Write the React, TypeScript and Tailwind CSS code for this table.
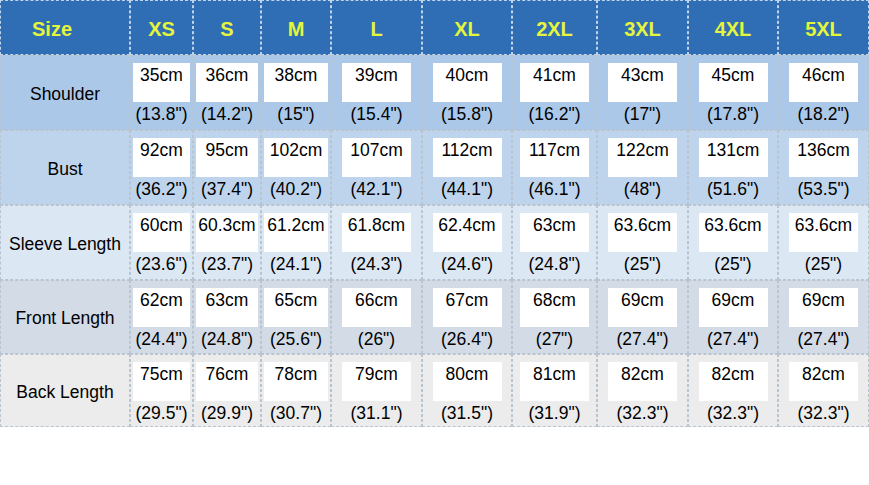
import React from 'react';

const SIZES = ['XS', 'S', 'M', 'L', 'XL', '2XL', '3XL', '4XL', '5XL'];

const ROWS: { label: string; bg: string; height: string; cells: [string, string][] }[] = [
    {
        label: 'Shoulder',
        bg: 'bg-[#abc8e8]',
        height: 'h-[75px]',
        cells: [
            ['35cm', '(13.8")'], ['36cm', '(14.2")'], ['38cm', '(15")'], ['39cm', '(15.4")'], ['40cm', '(15.8")'],
            ['41cm', '(16.2")'], ['43cm', '(17")'], ['45cm', '(17.8")'], ['46cm', '(18.2")'],
        ],
    },
    {
        label: 'Bust',
        bg: 'bg-[#bed4ed]',
        height: 'h-[75px]',
        cells: [
            ['92cm', '(36.2")'], ['95cm', '(37.4")'], ['102cm', '(40.2")'], ['107cm', '(42.1")'], ['112cm', '(44.1")'],
            ['117cm', '(46.1")'], ['122cm', '(48")'], ['131cm', '(51.6")'], ['136cm', '(53.5")'],
        ],
    },
    {
        label: 'Sleeve Length',
        bg: 'bg-[#dce7f4]',
        height: 'h-[75px]',
        cells: [
            ['60cm', '(23.6")'], ['60.3cm', '(23.7")'], ['61.2cm', '(24.1")'], ['61.8cm', '(24.3")'], ['62.4cm', '(24.6")'],
            ['63cm', '(24.8")'], ['63.6cm', '(25")'], ['63.6cm', '(25")'], ['63.6cm', '(25")'],
        ],
    },
    {
        label: 'Front Length',
        bg: 'bg-[#d3dbe7]',
        height: 'h-[74px]',
        cells: [
            ['62cm', '(24.4")'], ['63cm', '(24.8")'], ['65cm', '(25.6")'], ['66cm', '(26")'], ['67cm', '(26.4")'],
            ['68cm', '(27")'], ['69cm', '(27.4")'], ['69cm', '(27.4")'], ['69cm', '(27.4")'],
        ],
    },
    {
        label: 'Back Length',
        bg: 'bg-[#ececec]',
        height: 'h-[73px]',
        cells: [
            ['75cm', '(29.5")'], ['76cm', '(29.9")'], ['78cm', '(30.7")'], ['79cm', '(31.1")'], ['80cm', '(31.5")'],
            ['81cm', '(31.9")'], ['82cm', '(32.3")'], ['82cm', '(32.3")'], ['82cm', '(32.3")'],
        ],
    },
];

const GRID = 'grid grid-cols-[130px_63px_68px_70px_91px_90px_85px_91px_90px_91px]';

const App: React.FC = () => {
    return (
        <div className="w-[869px] h-[485px] bg-white font-['Liberation_Sans',Arial,sans-serif] text-[17.5px] text-black overflow-hidden">
            {/* header */}
            <div className={`${GRID} h-[55px] bg-[#2f6db4]`}>
                <div className="flex items-center pl-[31px] pt-[2px] border border-dashed border-white/70 font-bold text-[20px] text-[#e4f53c]">
                    Size
                </div>
                {SIZES.map(size => (
                    <div
                        key={size}
                        className="flex items-center justify-center pt-[2px] border border-dashed border-white/70 font-bold text-[20px] text-[#e4f53c]"
                    >
                        {size}
                    </div>
                ))}
            </div>

            {ROWS.map(row => (
                <div key={row.label} className={`${GRID} ${row.height} ${row.bg}`}>
                    <div className="flex items-center justify-center pt-[3px] border border-dashed border-[#b9c4d1]">
                        {row.label}
                    </div>
                    {row.cells.map(([cm, inch], i) => (
                        <div key={i} className="flex flex-col items-center pt-[7px] border border-dashed border-[#b9c4d1]">
                            <div className="w-[69px] max-w-[calc(100%-4px)] h-[39px] bg-white text-center leading-[20px] pt-[2px] whitespace-nowrap">
                                {cm}
                            </div>
                            <div className="mt-[2px] leading-[20px] whitespace-nowrap">{inch}</div>
                        </div>
                    ))}
                </div>
            ))}
        </div>
    );
};

export default App;
